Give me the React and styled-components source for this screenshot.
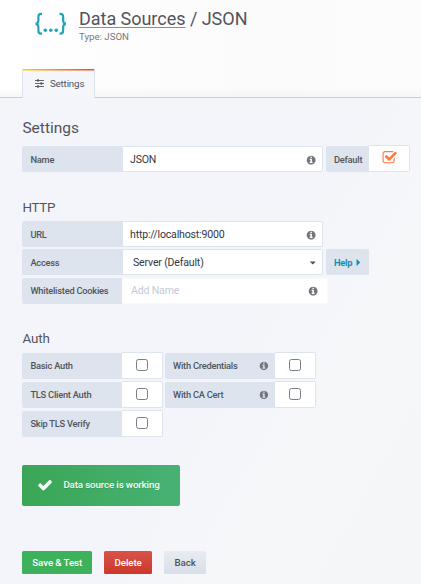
import React from "react";
import styled, { createGlobalStyle } from "styled-components";

const GlobalStyle = createGlobalStyle`
  * { box-sizing: border-box; }
  body {
    margin: 0;
    font-family: Roboto, "Liberation Sans", sans-serif;
    color: #52545c;
  }
`;

const Page = styled.div`
  width: 421px;
  height: 584px;
  overflow: hidden;
  background: linear-gradient(120deg, #f4f5fa 0%, #f3f5fa 57%, #f6f7f9 72%, #f5f6f8 100%);
`;

const Header = styled.header`
  display: flex;
  flex-direction: column;
  justify-content: space-between;
  height: 98px;
  padding: 8px 0 0 22.4px;
  border-bottom: 1px solid #c7d0d9;
  background: linear-gradient(90deg, #ffffff, #fbfbfb 60%, #fcfcfc);
  box-shadow: inset 0 -10px 10px -8px #f0f2f5;
`;

const Heading = styled.div`
  display: flex;
  gap: 12px;
  padding-left: 11.6px;
`;

const BraceIcon = styled.svg`
  width: 33px;
  height: 28px;
  margin-top: 3px;
  fill: #21a6b7;
`;

const Title = styled.h1`
  margin: 0;
  font-size: 18px;
  line-height: 22px;
  font-weight: 400;
  letter-spacing: -0.03px;
  white-space: nowrap;
`;

const TitleLink = styled.a`
  text-decoration: underline;
  text-decoration-color: #8b8c92;
  text-decoration-thickness: 1px;
  text-underline-offset: 2px;
`;

const SubTitle = styled.div`
  font-size: 9.7px;
  line-height: 13px;
  color: #767980;
`;

const Tab = styled.div`
  display: flex;
  align-items: center;
  gap: 5.5px;
  width: 73px;
  height: 29px;
  margin-bottom: -1px;
  border: 1px solid #dde4ed;
  border-top: 0;
  border-bottom: 0;
  padding-left: 12px;
  background:
    linear-gradient(90deg, #ffd500 0%, #ff7b1c 55%, #f04b26 100%) top / 100% 1.5px no-repeat,
    #f5f6fa;
  background-origin: border-box;
  font-size: 9.75px;
  letter-spacing: -0.15px;
`;

const Main = styled.main`
  display: flex;
  flex-direction: column;
  padding-left: 22.4px;
`;

const SectionTitle = styled.h2`
  margin: ${(p) => p.$top}px 0 0;
  height: ${(p) => p.$height}px;
  font-size: ${(p) => p.$size}px;
  line-height: 20px;
  font-weight: 400;
  letter-spacing: ${(p) => p.$spacing || 0}px;
  color: #52545c;
`;

const Rows = styled.div`
  display: flex;
  flex-direction: column;
  gap: ${(p) => p.$gap}px;
`;

const Row = styled.div`
  display: flex;
  height: 26px;
`;

const Label = styled.div`
  display: flex;
  align-items: center;
  justify-content: space-between;
  width: ${(p) => p.$width}px;
  height: 26px;
  margin-left: ${(p) => p.$gap || 0}px;
  padding: 0 6px 0 8px;
  border-radius: 2px 0 0 2px;
  background: #dde4ed;
  color: ${(p) => p.$color || "#52545c"};
  font-size: 9.3px;
  font-weight: ${(p) => p.$weight || 500};
  letter-spacing: -0.24px;
  white-space: nowrap;
`;

const Field = styled.div`
  display: flex;
  align-items: center;
  justify-content: space-between;
  width: ${(p) => p.$width}px;
  height: 26px;
  padding: 0 6px 0 ${(p) => p.$pad || 7}px;
  border: 1px solid ${(p) => (p.$plain ? "#f9fafc" : "#dde4ed")};
  border-left: 0;
  border-radius: 0 2px 2px 0;
  background: #fff;
  color: ${(p) => (p.$plain ? "#c3cbd6" : "#35373f")};
  font-size: 10.6px;
  letter-spacing: -0.19px;
  white-space: nowrap;
`;

const CheckCell = styled.div`
  display: flex;
  align-items: center;
  justify-content: center;
  width: 41px;
  height: 27px;
  margin-top: -1px;
  border: 1px solid #dde4ed;
  border-left: 0;
  border-radius: 0 2px 2px 0;
  background: #fff;
`;

const Glyph = styled.svg`
  flex: none;
  width: ${(p) => p.$size}px;
  height: ${(p) => p.$size}px;
  margin: ${(p) => p.$margin || "0"};
  fill: ${(p) => p.$color};
`;

const EmptyBox = styled.span`
  width: 12px;
  height: 12px;
  border: 1px solid #7b7d86;
  border-radius: 2.5px;
`;

const Alert = styled.div`
  display: flex;
  align-items: center;
  gap: 10px;
  width: 157.5px;
  height: 41px;
  margin-top: 28px;
  padding: 0 0 1px 15px;
  border-radius: 2px;
  background: linear-gradient(90deg, #3aa655, #47b274);
  color: #f3fbf5;
  font-size: 9.75px;
  font-weight: 500;
  letter-spacing: -0.14px;
  text-shadow: 0 1px 0 rgba(0, 0, 0, 0.12);
`;

const Actions = styled.div`
  display: flex;
  gap: 12.4px;
  margin-top: 45px;
`;

const Button = styled.button`
  width: ${(p) => p.$width}px;
  height: 23px;
  padding: 0;
  border: 0;
  border-radius: 1.5px;
  background: ${(p) => p.$background};
  color: ${(p) => p.$color || "#fff"};
  font-family: inherit;
  font-size: 9.75px;
  font-weight: 500;
  letter-spacing: -0.1px;
  white-space: nowrap;
`;

const PATHS = {
  info: "M1152 1376v-160q0-14-9-23t-23-9h-96v-512q0-14-9-23t-23-9h-320q-14 0-23 9t-9 23v160q0 14 9 23t23 9h96v320h-96q-14 0-23 9t-9 23v160q0 14 9 23t23 9h448q14 0 23-9t9-23zm-128-896v-160q0-14-9-23t-23-9h-192q-14 0-23 9t-9 23v160q0 14 9 23t23 9h192q14 0 23-9t9-23zm640 416q0 209-103 385.5t-279.5 279.5-385.5 103-385.5-103-279.5-279.5-103-385.5 103-385.5 279.5-279.5 385.5-103 385.5 103 279.5 279.5 103 385.5z",
  checked: "M1472 930v318q0 119-84.5 203.5t-203.5 84.5h-832q-119 0-203.5-84.5t-84.5-203.5v-832q0-119 84.5-203.5t203.5-84.5h832q63 0 117 25 15 7 18 23 3 17-9 29l-49 49q-10 10-23 10-3 0-9-2-23-6-45-6h-832q-66 0-113 47t-47 113v832q0 66 47 113t113 47h832q66 0 113-47t47-113v-254q0-13 9-22l64-64q10-10 23-10 6 0 12 3 20 8 20 29zm231-489l-814 814q-24 24-57 24t-57-24l-430-430q-24-24-24-57t24-57l110-110q24-24 57-24t57 24l263 263 647-647q24-24 57-24t57 24l110 110q24 24 24 57t-24 57z",
  check: "M1671 566q0 40-28 68l-724 724-136 136q-28 28-68 28t-68-28l-136-136-362-362q-28-28-28-68t28-68l136-136q28-28 68-28t68 28l294 295 656-657q28-28 68-28t68 28l136 136q28 28 28 68z",
  down: "M1408 704q0 26-19 45l-448 448q-19 19-45 19t-45-19l-448-448q-19-19-19-45t19-45 45-19h896q26 0 45 19t19 45z",
  right: "M1152 896q0 26-19 45l-448 448q-19 19-45 19t-45-19-19-45v-896q0-26 19-45t45-19 45 19l448 448q19 19 19 45z",
};

const Icon = ({ name, size = 10.3, color = "#73757d", margin }) => (
  <Glyph viewBox="0 0 1792 1792" $size={size} $color={color} $margin={margin}>
    <path d={PATHS[name]} />
  </Glyph>
);

const Sliders = () => (
  <Glyph viewBox="0 0 9 9" $size={9} $color="none" $margin="0">
    <path d="M0 1.5h9M0 4.5h9M0 7.5h9" stroke="#52545c" strokeWidth="0.9" />
    <path d="M3 .3v2.4M6.3 3.3v2.4M3 6.3v2.4" stroke="#52545c" strokeWidth="1.6" />
  </Glyph>
);

export default function App() {
  return (
    <Page>
      <GlobalStyle />
      <Header>
        <Heading>
          <BraceIcon viewBox="0 0 33 28">
            <path
              d="M8 2.8H7Q4.4 2.8 4.4 5.5V9Q4.4 12.8 1.5 12.8Q4.4 12.8 4.4 16.6V19.8Q4.4 22.6 7 22.6H8M25.5 2.8h1Q29.1 2.8 29.1 5.5V9Q29.1 12.8 32 12.8Q29.1 12.8 29.1 16.6V19.8Q29.1 22.6 26.5 22.6H25.5"
              fill="none"
              stroke="#21a6b7"
              strokeWidth="2.2"
            />
            <circle cx="11.3" cy="19.3" r="1.8" />
            <circle cx="16.8" cy="19.3" r="1.8" />
            <circle cx="22.3" cy="19.3" r="1.8" />
          </BraceIcon>
          <div>
            <Title>
              <TitleLink>Data Sources</TitleLink> / JSON
            </Title>
            <SubTitle>Type: JSON</SubTitle>
          </div>
        </Heading>
        <Tab>
          <Sliders />
          Settings
        </Tab>
      </Header>
      <Main>
        <SectionTitle $top={20} $height={28} $size={15.5}>Settings</SectionTitle>
        <Row>
          <Label $width={100.6}>Name</Label>
          <Field $width={200.5}>
            JSON
            <Icon name="info" margin="2px 0 0" />
          </Field>
          <Label $width={43} $gap={2.5}>Default</Label>
          <CheckCell>
            <Icon name="checked" size={15.5} color="#ff7941" margin="0 0 1px 1px" />
          </CheckCell>
        </Row>

        <SectionTitle $top={26} $height={23} $size={13.4} $spacing={-0.25}>HTTP</SectionTitle>
        <Rows $gap={2.3}>
          <Row>
            <Label $width={100.6}>URL</Label>
            <Field $width={200.5}>
              http://localhost:9000
              <Icon name="info" margin="2px 0 0" />
            </Field>
          </Row>
          <Row>
            <Label $width={100.6}>Access</Label>
            <Field $width={200.5} $pad={10}>
              Server (Default)
              <Icon name="down" size={9.5} color="#52545c" margin="0 -1.5px 0 0" />
            </Field>
            <Label $width={43} $gap={2.5} $color="#0f8fb8" $weight={700}>
              Help
              <Icon name="right" size={11} color="#0f8fb8" margin="0 -1px 0 0" />
            </Label>
          </Row>
          <Row>
            <Label $width={99.6}>Whitelisted Cookies</Label>
            <Field $width={206} $pad={9} $plain>
              Add Name
              <Icon name="info" margin="2px 3px 0 0" />
            </Field>
          </Row>
        </Rows>

        <SectionTitle $top={25.4} $height={24} $size={13.4} $spacing={-0.1}>Auth</SectionTitle>
        <Rows $gap={3}>
          {[
            ["Basic Auth", "With Credentials"],
            ["TLS Client Auth", "With CA Cert"],
            ["Skip TLS Verify"],
          ].map(([left, right]) => (
            <Row key={left}>
              <Label $width={99.6}>{left}</Label>
              <CheckCell><EmptyBox /></CheckCell>
              {right && (
                <>
                  <Label $width={110} $gap={2}>
                    {right}
                    <Icon name="info" size={9.8} />
                  </Label>
                  <CheckCell><EmptyBox /></CheckCell>
                </>
              )}
            </Row>
          ))}
        </Rows>

        <Alert>
          <Icon name="check" size={16} color="#fff" />
          Data source is working
        </Alert>

        <Actions>
          <Button $width={69.7} $background="#3eb15b">Save &amp; Test</Button>
          <Button $width={47.3} $background="linear-gradient(#d9534a, #cb3829)">Delete</Button>
          <Button $width={42} $background="linear-gradient(#e8ebf1, #d8dfe9)" $color="#52545c">Back</Button>
        </Actions>
      </Main>
    </Page>
  );
}
